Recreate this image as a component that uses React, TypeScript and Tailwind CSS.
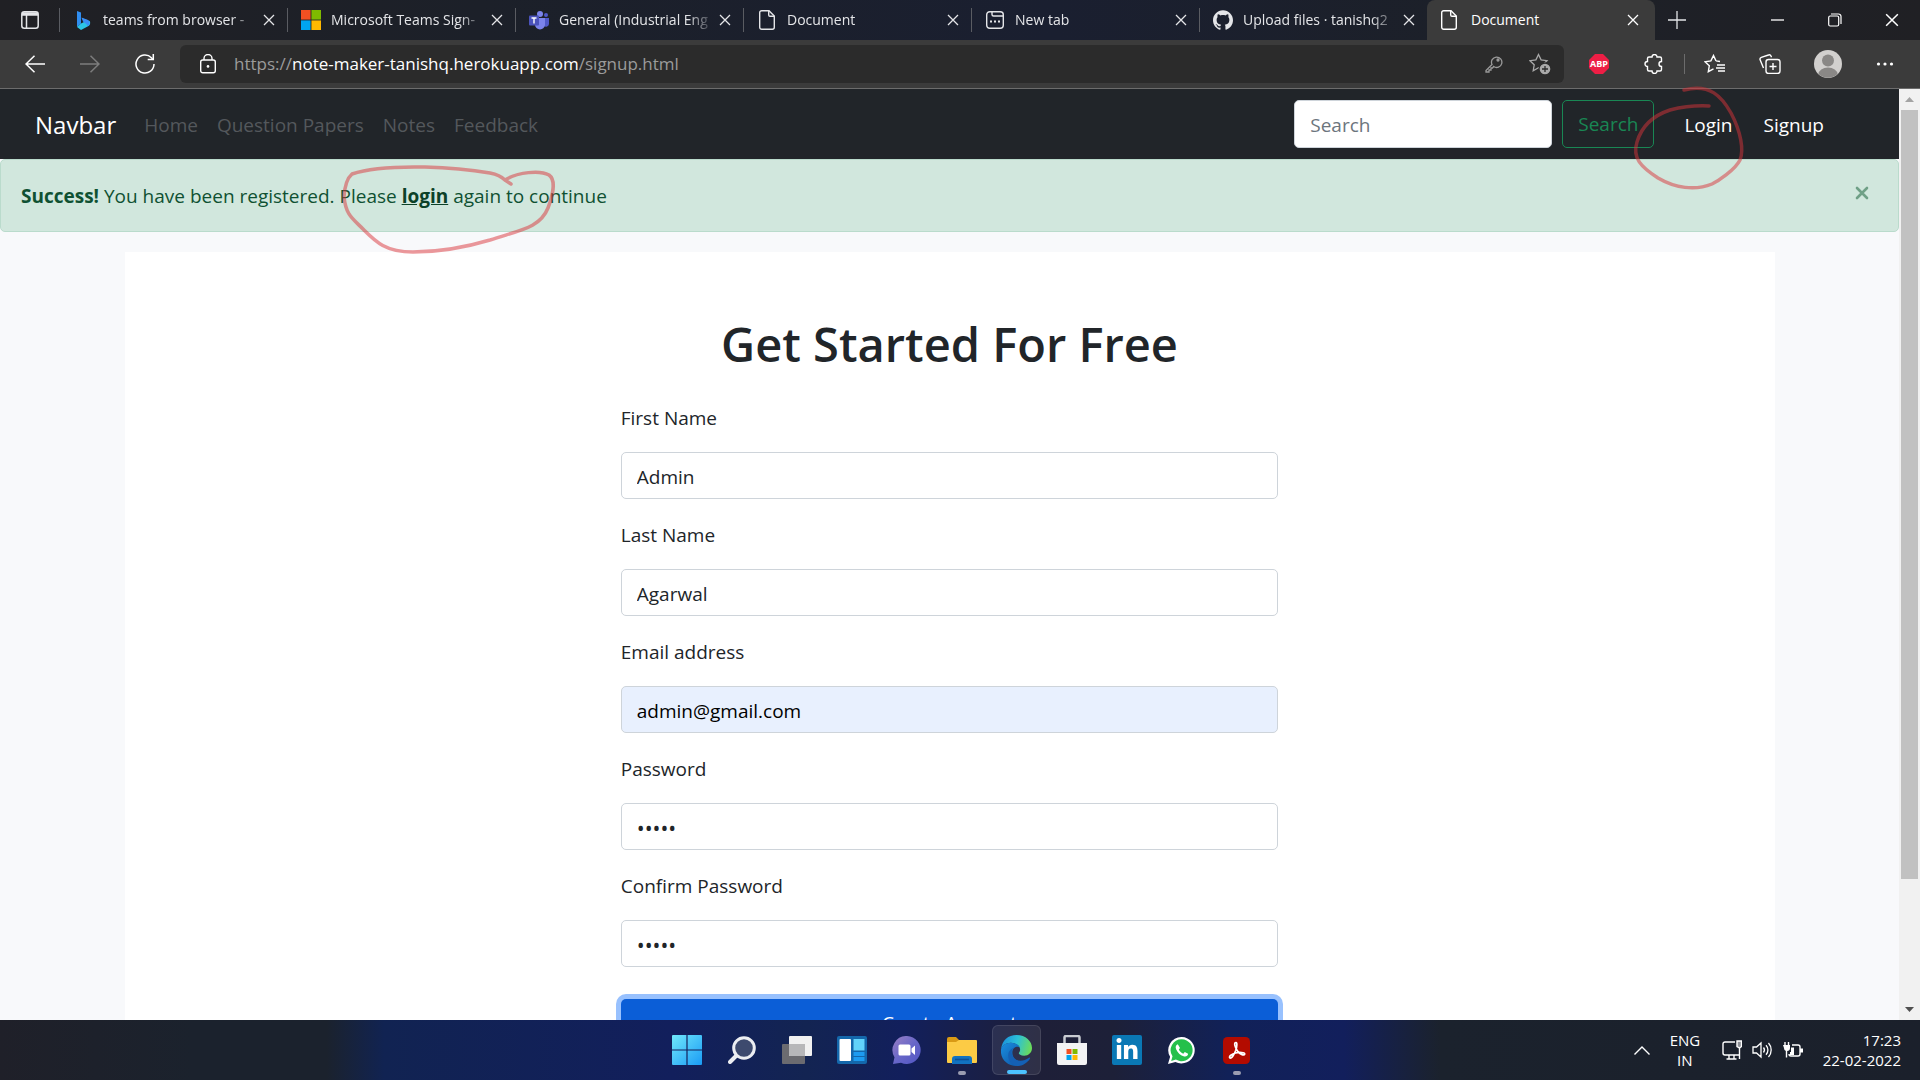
import React, { ReactNode } from 'react';
import { SiGithub } from 'react-icons/si';
import { FaLinkedinIn } from 'react-icons/fa';

const tabFade = 'min-w-0 flex-1 overflow-hidden whitespace-nowrap [mask-image:linear-gradient(to_right,#000_calc(100%-28px),transparent)]';

function Cross({ size = 12 }: { size?: number }) {
  return (
    <svg width={size} height={size} viewBox="0 0 12 12" fill="none" stroke="currentColor" strokeWidth="1.3" aria-hidden="true">
      <path d="M1 1l10 10M11 1L1 11" />
    </svg>
  );
}

function BingIcon() {
  return (
    <svg width="16" height="20" viewBox="0 0 16 20" aria-hidden="true">
      <path d="M2 1l4 1.5v11L2 17z" fill="#2f8df0" />
      <path d="M2 17l4-3.500 3.500-1.800L6.500 8l8 3c1 .7 1 3.500-.5 4.700L6 20 2 17z" fill="#2cc4e6" />
      <path d="M6.500 7.500l6 2.200c3 1.500 2.600 5 .3 6.600-.5-2.400-3.800-3.600-4.800-4.800z" fill="#3a8ef5" />
    </svg>
  );
}

function MicrosoftIcon({ size = 20 }: { size?: number }) {
  return (
    <svg width={size} height={size} viewBox="0 0 20 20" aria-hidden="true">
      <path d="M0 0h9.600v9.600H0z" fill="#f25022" />
      <path d="M10.400 0H20v9.600h-9.600z" fill="#7fba00" />
      <path d="M0 10.400h9.600V20H0z" fill="#00a4ef" />
      <path d="M10.400 10.400H20V20h-9.600z" fill="#ffb900" />
    </svg>
  );
}

function TeamsIcon() {
  return (
    <svg width="20" height="20" viewBox="0 0 20 20" aria-hidden="true">
      <circle cx="17" cy="5" r="2" fill="#5059c9" />
      <path d="M14 8h6v6a3 3 0 0 1-5 2z" fill="#5059c9" />
      <circle cx="11" cy="4" r="3" fill="#7b83eb" />
      <path d="M6 8h10v6.500a5 5 0 0 1-10 0z" fill="#7b83eb" />
      <rect x="0" y="5.500" width="10" height="10" rx="1" fill="#4b53bc" />
      <path d="M2.500 8h5M5 8v5.500" stroke="#fff" strokeWidth="1.400" />
    </svg>
  );
}

function PageIcon() {
  return (
    <svg width="16" height="20" viewBox="0 0 16 20" fill="none" stroke="currentColor" strokeWidth="1.400" aria-hidden="true">
      <path d="M2.700 .7H10l5.300 5.300v11.300a2 2 0 0 1-2 2H2.700a2 2 0 0 1-2-2V2.700a2 2 0 0 1 2-2z" />
      <path d="M9.700 .7V5a1.300 1.300 0 0 0 1.300 1.300h4.300" />
    </svg>
  );
}

function NewTabIcon() {
  return (
    <svg width="18" height="18" viewBox="0 0 18 18" fill="none" stroke="currentColor" strokeWidth="1.400" aria-hidden="true">
      <rect x=".7" y=".7" width="16.600" height="16.600" rx="3" />
      <path d="M6 1v2.500a1.500 1.500 0 0 0 1.500 1.500H17" />
      <path d="M4 10.500h2M8 10.500h2M12 10.500h2" strokeWidth="2" />
    </svg>
  );
}

const tabs: { title: string; icon: ReactNode }[] = [
  { title: 'teams from browser -', icon: <BingIcon /> },
  { title: 'Microsoft Teams Sign-', icon: <MicrosoftIcon /> },
  { title: 'General (Industrial Eng', icon: <TeamsIcon /> },
  { title: 'Document', icon: <PageIcon /> },
  { title: 'New tab', icon: <NewTabIcon /> },
  { title: 'Upload files · tanishq2', icon: <SiGithub size={20} /> },
];

function TabBar() {
  return (
    <div className="flex h-10 bg-[linear-gradient(90deg,#202024,#1c2029_25%,#1a1f30_55%,#1c2029_75%,#202024)] font-['Open_Sans',sans-serif] text-sm text-[#e4e5e8]">
      <div className="flex w-[59px] items-center justify-center">
        <button aria-label="Tab actions">
          <svg width="18" height="18" viewBox="0 0 18 18" fill="none" stroke="currentColor" strokeWidth="1.500" aria-hidden="true">
            <rect x=".8" y=".8" width="16.400" height="16.400" rx="2.500" />
            <path d="M1 3h16" strokeWidth="3.500" />
            <path d="M5.500 4v13" />
          </svg>
        </button>
      </div>
      {tabs.map((tab) => (
        <div key={tab.title} className="flex min-w-0 max-w-[228px] flex-1 items-center">
          <div className="h-6 w-px shrink-0 bg-[#5a5c62]" />
          <div className="flex min-w-0 flex-1 items-center pl-[13px] pr-2">
            <span className="flex w-5 shrink-0 justify-center">{tab.icon}</span>
            <span className={`ml-[10px] ${tabFade}`}>{tab.title}</span>
            <button aria-label={`Close ${tab.title}`} className="p-1"><Cross size={12} /></button>
          </div>
        </div>
      ))}
      <div className="flex min-w-0 max-w-[228px] flex-1 items-center rounded-t-lg bg-[#3b3b3b] pl-3 pr-4 text-white">
        <span className="flex w-5 shrink-0 justify-center"><PageIcon /></span>
        <span className="ml-3 flex-1">Document</span>
        <button aria-label="Close Document"><Cross size={12} /></button>
      </div>
      <button aria-label="New tab" className="flex w-11 items-center justify-center">
        <svg width="18" height="18" viewBox="0 0 18 18" stroke="currentColor" strokeWidth="1.300" aria-hidden="true"><path d="M9 0v18M0 9h18" /></svg>
      </button>
      <div className="ml-auto flex text-white">
        <button aria-label="Minimise" className="flex w-[57px] items-center justify-center">
          <svg width="13" height="12" viewBox="0 0 13 12" stroke="currentColor" strokeWidth="1.300" aria-hidden="true"><path d="M0 6h13" /></svg>
        </button>
        <button aria-label="Restore" className="flex w-[57px] items-center justify-center">
          <svg width="14" height="14" viewBox="0 0 14 14" fill="none" stroke="currentColor" strokeWidth="1.200" aria-hidden="true">
            <rect x=".7" y="3" width="10" height="10" rx="1.500" />
            <path d="M3 1h7.500a2.500 2.500 0 0 1 2.500 2.500v7.500" />
          </svg>
        </button>
        <button aria-label="Close" className="flex w-[57px] items-center justify-center"><Cross size={14} /></button>
      </div>
    </div>
  );
}

const star = 'M9.500 1.500l2.600 5.400 5.900.8-4.300 4.100 1 5.900-5.200-2.900-5.300 2.900 1-5.900L1 7.700l5.900-.8z';

function Toolbar() {
  return (
    <div className="flex h-[49px] items-center border-b border-[#6c6c6c] bg-[#3b3b3b] text-white">
      <div className="flex w-[180px] shrink-0 items-center">
        <button aria-label="Back" className="ml-[25px] w-5">
          <svg width="20" height="18" viewBox="0 0 20 18" fill="none" stroke="currentColor" strokeWidth="1.500" aria-hidden="true"><path d="M20 9H1M9.500 .7L1 9l8.500 8.300" /></svg>
        </button>
        <button aria-label="Forward" className="ml-[35px] w-5 text-[#7d7d7d]">
          <svg width="20" height="18" viewBox="0 0 20 18" fill="none" stroke="currentColor" strokeWidth="1.500" aria-hidden="true"><path d="M0 9h19M10.500 .7L19 9l-8.500 8.300" /></svg>
        </button>
        <button aria-label="Refresh" className="ml-[35px] w-5">
          <svg width="20" height="20" viewBox="0 0 20 20" fill="none" stroke="currentColor" strokeWidth="1.500" aria-hidden="true">
            <path d="M19 10a9 9 0 1 1-2.600-6.300L18 5.500" />
            <path d="M18.300 0v5.600h-5.600" />
          </svg>
        </button>
      </div>
      <div className="flex h-[38px] min-w-0 flex-1 items-center rounded-md bg-[#2b2b2b]">
        <svg className="ml-5 shrink-0" width="16" height="20" viewBox="0 0 16 20" fill="none" stroke="currentColor" strokeWidth="1.400" aria-hidden="true">
          <rect x=".7" y="6" width="14.600" height="12.800" rx="2" />
          <path d="M4 6V4.500a4 4 0 0 1 8 0V6" />
          <circle cx="8" cy="12.400" r="1.300" fill="currentColor" stroke="none" />
        </svg>
        <div className="ml-[18px] flex-1 whitespace-nowrap font-['Open_Sans',sans-serif] text-[17px] text-[#9b9b9b]">
          https://<span className="text-white">note-maker-tanishq.herokuapp.com</span>/signup.html
        </div>
        <button aria-label="Saved passwords" className="text-[#9b9b9b]">
          <svg width="18" height="18" viewBox="0 0 18 18" fill="none" stroke="currentColor" strokeWidth="1.300" aria-hidden="true">
            <path d="M7 9.500L1 15.500V17h3v-2h2v-2h1.500l1.200-1.500A5.200 5.200 0 1 0 7 9.500z" />
            <circle cx="13" cy="5" r="1" fill="currentColor" />
          </svg>
        </button>
        <button aria-label="Add to favourites" className="ml-[26px] mr-[13px] text-[#a9a9a9]">
          <svg width="22" height="22" viewBox="0 0 22 22" fill="none" stroke="currentColor" strokeWidth="1.300" aria-hidden="true">
            <path d={star} />
            <circle cx="16" cy="16" r="6" fill="currentColor" stroke="#2b2b2b" />
            <path d="M16 13v6M13 16h6" stroke="#2b2b2b" />
          </svg>
        </button>
      </div>
      <div className="flex w-[356px] shrink-0 items-center pl-[25px]">
        <button aria-label="Adblock Plus" className="flex size-5 items-center justify-center bg-[#ed1e45] font-['Open_Sans',sans-serif] text-[9px] font-bold text-white [clip-path:polygon(30%_0,70%_0,100%_30%,100%_70%,70%_100%,30%_100%,0_70%,0_30%)]">ABP</button>
        <button aria-label="Extensions" className="ml-[35px]">
          <svg width="20" height="20" viewBox="0 0 20 20" fill="none" stroke="currentColor" strokeWidth="1.400" aria-hidden="true">
            <path d="M5 3h3a2.500 2.500 0 0 1 5 0h3a1.500 1.500 0 0 1 1.500 1.500v3a2.500 2.500 0 0 0 0 5v3A1.500 1.500 0 0 1 16 17h-3a2.500 2.500 0 0 1-5 0H5a1.500 1.500 0 0 1-1.500-1.500v-3a2.500 2.500 0 0 1 0-5v-3A1.500 1.500 0 0 1 5 3z" />
          </svg>
        </button>
        <div className="ml-5 h-5 w-px bg-[#6c6c6c]" />
        <button aria-label="Favourites" className="ml-[19px]">
          <svg width="22" height="20" viewBox="0 0 22 20" fill="none" stroke="currentColor" strokeWidth="1.400" aria-hidden="true">
            <path d="M12 6.900L9.500 1.500 6.900 6.900 1 7.700l4.300 4.100-1 5.900 5.200-2.900M12 6.900l4 .6M13 11h8M12 14h9M14 17h7" />
          </svg>
        </button>
        <button aria-label="Collections" className="ml-[33px]">
          <svg width="22" height="20" viewBox="0 0 22 20" fill="none" stroke="currentColor" strokeWidth="1.400" aria-hidden="true">
            <rect x="7" y="5.500" width="14" height="14" rx="2.500" />
            <path d="M14 9v7M10.500 12.500h7M4.500 14L1.200 6a2 2 0 0 1 1.100-2.600L9.500 1a2 2 0 0 1 2.500 1l.5 1.200" />
          </svg>
        </button>
        <button aria-label="Profile" className="ml-[33px]">
          <svg width="28" height="28" viewBox="0 0 28 28" aria-hidden="true">
            <circle cx="14" cy="14" r="14" fill="#d2d0ce" />
            <circle cx="14" cy="10.500" r="6" fill="#8a8886" />
            <path d="M4.500 24a9.500 6.500 0 0 1 19 0A14 14 0 0 1 4.500 24z" fill="#8a8886" />
          </svg>
        </button>
        <button aria-label="Settings and more" className="ml-[34px]">
          <svg width="18" height="4" viewBox="0 0 18 4" fill="currentColor" aria-hidden="true"><circle cx="2.500" cy="2" r="1.600" /><circle cx="9" cy="2" r="1.600" /><circle cx="15.500" cy="2" r="1.600" /></svg>
        </button>
      </div>
    </div>
  );
}

function Navbar() {
  return (
    <nav className="flex h-[70px] items-center bg-[#212529] pl-[35px] pr-[75px] text-[19px]">
      <a href="#" className="mr-7 pt-0.5 text-2xl text-white">Navbar</a>
      <div className="flex gap-[19px] pt-0.5 text-[#54585c]">
        <a href="#">Home</a>
        <a href="#">Question Papers</a>
        <a href="#">Notes</a>
        <a href="#">Feedback</a>
      </div>
      <form className="ml-auto flex gap-[10px]">
        <input type="search" aria-label="Search" placeholder="Search" className="h-12 w-[258px] rounded-[5px] border border-[#ced4da] bg-white px-[15px] pt-0.5 placeholder:text-[#6c757d]" />
        <button type="button" className="h-12 rounded-[5px] border border-[#198754] px-[15px] text-[#198754]">Search</button>
      </form>
      <a href="#" className="ml-[30px] pt-0.5 text-white">Login</a>
      <a href="#" className="ml-[31px] pt-0.5 text-white">Signup</a>
    </nav>
  );
}

function Alert() {
  return (
    <div role="alert" className="flex h-[73px] items-center justify-between rounded-[5px] border border-[#badbcc] bg-[#d1e7dd] pl-5 pr-[29px] text-[19px] text-[#0f5132]">
      <p className="pt-0.5">
        <strong className="font-bold">Success!</strong> You have been registered. Please{' '}
        <a href="#" className="font-bold text-[#0c4128] underline">login</a> again to continue
      </p>
      <button aria-label="Close" className="mb-1.5 text-[#6fa086]">
        <svg width="14" height="14" viewBox="0 0 14 14" stroke="currentColor" strokeWidth="2.600" strokeLinecap="round" aria-hidden="true"><path d="M2 2l10 10M12 2L2 12" /></svg>
      </button>
    </div>
  );
}

const fields = [
  { id: 'first', label: 'First Name', type: 'text', value: 'Admin', tone: 'bg-white text-[19px]' },
  { id: 'last', label: 'Last Name', type: 'text', value: 'Agarwal', tone: 'bg-white text-[19px]' },
  { id: 'email', label: 'Email address', type: 'email', value: 'admin@gmail.com', tone: 'bg-[#e8f0fe] text-[19px] text-black' },
  { id: 'password', label: 'Password', type: 'password', value: 'admin', tone: 'bg-white text-[21px]' },
  { id: 'confirm', label: 'Confirm Password', type: 'password', value: 'admin', tone: 'bg-white text-[21px]' },
];

function SignupForm() {
  return (
    <div className="mx-auto mt-5 w-full max-w-[1650px] bg-white pb-20 pt-[62px] text-[#212529]">
      <h1 className="text-center text-[47px] font-semibold leading-[60px]">Get Started For Free</h1>
      <form className="mx-auto mt-[29px] w-5/12 px-[15px]">
        {fields.map((f) => (
          <div key={f.id} className="mb-[21px]">
            <label htmlFor={f.id} className="mb-[19px] block text-[19px] leading-[30px]">{f.label}</label>
            <input id={f.id} type={f.type} defaultValue={f.value} className={`block h-[47px] w-full rounded-[5px] border border-[#ced4da] px-[15px] pt-0.5 ${f.tone}`} />
          </div>
        ))}
        <button type="button" className="mt-[11px] h-12 w-full rounded-[5px] bg-[#0b5ed7] text-[19px] text-white ring-[5px] ring-[#98c1fe]">Create Account</button>
      </form>
    </div>
  );
}

function Scrollbar() {
  return (
    <div className="flex w-[21px] shrink-0 flex-col items-center bg-[#f1f1f1]">
      <svg className="my-2 shrink-0" width="9" height="5" viewBox="0 0 9 5" aria-hidden="true"><path d="M0 5l4.500-5L9 5z" fill="#a3a3a3" /></svg>
      <div className="flex w-[17px] flex-1 flex-col"><div className="h-[86.5%] bg-[#c1c1c1]" /></div>
      <svg className="my-2 shrink-0" width="9" height="5" viewBox="0 0 9 5" aria-hidden="true"><path d="M0 0h9L4.500 5z" fill="#505050" /></svg>
    </div>
  );
}

function InkMarks() {
  return (
    <svg className="pointer-events-none absolute left-0 top-0" width="1920" height="280" viewBox="0 0 1920 280" fill="none" stroke="#d9333a" strokeOpacity=".5" strokeWidth="3.500" strokeLinecap="round" strokeLinejoin="round" aria-hidden="true">
      <path d="M511 184L505 180Q500 175 490 173Q460 168 425 167Q375 166 352 174Q345 180 344 197C346 215 352 218 363 229C375 241 385 252 413 252C440 252 470 246 490 240C520 230 540 228 548 208C553 195 556 180 549 175C540 170 518 172 505 180" />
      <path d="M1684 90C1710 83 1722 97 1731 113C1741 132 1744 150 1740 160C1735 170 1718 181 1712 184C1695 191 1675 188 1658 178C1641 167 1632 158 1637 142C1642 125 1655 115 1670 110Q1690 105 1709 106" />
    </svg>
  );
}

const taskIcons: { name: string; state?: 'active' | 'open'; icon: ReactNode }[] = [
  {
    name: 'Start',
    icon: (
      <svg width="30" height="30" viewBox="0 0 30 30">
        <defs><linearGradient id="win" x1="0" y1="0" x2="1" y2="1"><stop offset="0" stopColor="#70e8fb" /><stop offset="1" stopColor="#1a9bf5" /></linearGradient></defs>
        <path d="M1 0h13.400v14.400H0V1a1 1 0 0 1 1-1zM15.600 0H29a1 1 0 0 1 1 1v13.400H15.600zM0 15.600h14.400V30H1a1 1 0 0 1-1-1zM15.600 15.600H30V29a1 1 0 0 1-1 1H15.600z" fill="url(#win)" />
      </svg>
    ),
  },
  {
    name: 'Search',
    icon: (
      <svg width="28" height="28" viewBox="0 0 28 28" fill="none" stroke="#eceef2" strokeLinecap="round">
        <path d="M9 19l-7 7" strokeWidth="4" />
        <circle cx="16" cy="12" r="10.300" fill="#3d4a6e" strokeWidth="3" />
      </svg>
    ),
  },
  {
    name: 'Task View',
    icon: (
      <svg width="30" height="28" viewBox="0 0 30 28">
        <rect y="8" width="23" height="20" rx="1" fill="#6b6b70" />
        <rect x="7" width="23" height="20" rx="1" fill="#f1f1f1" />
        <path d="M7 8h16v12H8a1 1 0 0 1-1-1z" fill="#b7b7b9" />
      </svg>
    ),
  },
  {
    name: 'Widgets',
    icon: (
      <svg width="30" height="28" viewBox="0 0 30 28">
        <rect width="30" height="28" rx="2" fill="#1467ab" />
        <rect x="2.500" y="3" width="11.500" height="22" rx="1" fill="#fff" />
        <path d="M16.500 3H27.500v11.500h-11z" fill="#62d3fa" />
        <path d="M16.500 16h11v4h-11zM16.500 21h11v4h-11z" fill="#1d9bf0" />
      </svg>
    ),
  },
  {
    name: 'Chat',
    icon: (
      <svg width="29" height="28" viewBox="0 0 29 28">
        <defs><linearGradient id="chat" x1="0" y1="0" x2="1" y2="1"><stop offset="0" stopColor="#9a7fc4" /><stop offset=".5" stopColor="#6867c8" /><stop offset="1" stopColor="#5055c4" /></linearGradient></defs>
        <path d="M15 0a14 14 0 1 1-6 26.800L1 28l1.500-6.800A14 14 0 0 1 15 0z" fill="url(#chat)" />
        <rect x="6.500" y="8.500" width="12" height="11" rx="1.500" fill="#fff" />
        <path d="M19.500 12.500l3.500-3v9.500l-3.500-3z" fill="#fff" />
      </svg>
    ),
  },
  {
    name: 'File Explorer',
    state: 'open',
    icon: (
      <svg width="30" height="27" viewBox="0 0 30 27">
        <path d="M0 2a2 2 0 0 1 2-2h7l4 4v4H0z" fill="#d99a15" />
        <path d="M0 5h9l3-2h17a1 1 0 0 1 1 1v21a1 1 0 0 1-1 1H1a1 1 0 0 1-1-1z" fill="#fccb45" />
        <path d="M5 27v-5a3 3 0 0 1 3-3h14a3 3 0 0 1 3 3v5z" fill="#1272c0" />
        <path d="M8 22.500h14" stroke="#0d4f96" strokeWidth="1.600" />
      </svg>
    ),
  },
  {
    name: 'Microsoft Edge',
    state: 'active',
    icon: (
      <svg width="31" height="31" viewBox="0 0 30 30">
        <defs>
          <linearGradient id="edgeTop" x1="0" y1=".3" x2="1" y2=".5"><stop offset="0" stopColor="#1a8fdc" /><stop offset=".5" stopColor="#2cc0d8" /><stop offset="1" stopColor="#6bdc5a" /></linearGradient>
          <linearGradient id="edgeLow" x1="0" y1="0" x2="1" y2="1"><stop offset="0" stopColor="#1a8fe0" /><stop offset="1" stopColor="#0d4fa0" /></linearGradient>
        </defs>
        <path d="M0 14C1 5 7 0 15 0c9 0 15 6 15 12.500 0 4.500-3.500 7.500-7.500 7.500-3.500 0-5.300-1.200-5.300-2.300 0-.9 1.300-1.400 1.300-3.700C18.500 10 14 7.500 9.500 7.500 4.500 7.500 1 10.500 0 14z" fill="url(#edgeTop)" />
        <path d="M0 14c1-3.800 4.500-6.500 9.500-6.500 4 0 7.500 1.800 8.600 4.500-1.600-1.500-7.100-1-7.100 5 0 7 6.500 10 11.500 8.800C20.500 28.500 18 30 15 30 6 30-1 23 0 14z" fill="url(#edgeLow)" />
        <path d="M13 12.200c-3 2-3.500 6-1 9.300 3.500 4.500 10 4.300 15 .5.800-.5 1.500.2 1 1C25 27.500 20.500 30 16.500 30 10 29.500 6.500 24.500 7 19c.3-3.500 3-6 6-6.800z" fill="#1460b4" />
      </svg>
    ),
  },
  {
    name: 'Microsoft Store',
    icon: (
      <svg width="30" height="30" viewBox="0 0 30 30">
        <path d="M7.500 9V2.500a1.500 1.500 0 0 1 1.500-1.500h12a1.500 1.500 0 0 1 1.500 1.500V9" fill="none" stroke="#c9ccd2" strokeWidth="2.500" />
        <path d="M0 8h30v20a2 2 0 0 1-2 2H2a2 2 0 0 1-2-2z" fill="#f3f3f4" />
        <path d="M9.500 14h5v5h-5z" fill="#f25022" /><path d="M15.500 14h5v5h-5z" fill="#7fba00" />
        <path d="M9.500 20h5v5h-5z" fill="#00a4ef" /><path d="M15.500 20h5v5h-5z" fill="#ffb900" />
      </svg>
    ),
  },
  {
    name: 'LinkedIn',
    icon: <span className="flex size-[30px] items-center justify-center rounded-xs bg-[#0a78b5] text-white"><FaLinkedinIn size={24} /></span>,
  },
  {
    name: 'WhatsApp',
    icon: (
      <svg width="27" height="27" viewBox="0 0 27 27">
        <path d="M13.700 0a13.200 13.200 0 1 1-6.300 24.900L0 27l2.100-7.200A13.200 13.200 0 0 1 13.700 0z" fill="#fff" />
        <path d="M13.700 2.200a11 11 0 1 1-5.800 20.400L3.200 24l1.300-4.700A11 11 0 0 1 13.700 2.200z" fill="#25c04b" />
        <path d="M9.800 7.300c-2 .7-2.600 2.700-1.700 5 1.600 3.700 4.400 6.300 8.200 7.200 2 .4 3.600-.8 3.800-2.700l-3.300-1.700-1.500 1.600c-2-.8-3.500-2.200-4.500-4.200l1.200-1.500z" fill="#fff" />
      </svg>
    ),
  },
  {
    name: 'Adobe Acrobat',
    state: 'open',
    icon: (
      <svg width="27" height="27" viewBox="0 0 27 27">
        <rect width="27" height="27" rx="4.500" fill="#b30b00" />
        <path d="M13 5.500c-2.500 0-1 5 1.500 8.500 2 3 6.500 5 7.200 3.200.7-2-6-2.200-9.200-1.200-3.500 1-7 3.500-5.700 4.800 1.700 1.500 4.700-4 6-7.500 1.200-3.500 1.500-7.800.2-7.800z" fill="none" stroke="#fff" strokeWidth="1.700" />
      </svg>
    ),
  },
];

function Taskbar() {
  return (
    <footer className="grid h-[60px] shrink-0 grid-cols-[1fr_auto_1fr] bg-[linear-gradient(90deg,#1f2029,#1b222d_10%,#1b222d_17%,#112352_20%,#121f5c_35%,#132452_42%,#121f5c_47%,#1e1f38_54%,#1d2038_58%,#112158_64%,#121f5c_70%,#1b222d_75%,#1b202b)] font-['Open_Sans',sans-serif] text-white">
      <div />
      <div className="flex items-center pl-[3px]">
        {taskIcons.map((t) => (
          <button
            key={t.name}
            aria-label={t.name}
            className={`relative mx-[3px] flex h-[50px] w-[49px] items-center justify-center rounded-md ${t.state === 'active' ? 'border border-white/10 bg-white/8' : ''}`}
          >
            {t.icon}
            {t.state === 'active' && <span className="absolute bottom-0 h-1 w-5 rounded-full bg-[#4cc2ff]" />}
            {t.state === 'open' && <span className="absolute bottom-0 h-1 w-2 rounded-full bg-[#9a9cb0]" />}
          </button>
        ))}
      </div>
      <div className="flex items-center justify-end pr-[19px] text-[15px] leading-5">
        <button aria-label="Show hidden icons">
          <svg width="16" height="9" viewBox="0 0 16 9" fill="none" stroke="currentColor" strokeWidth="1.400" aria-hidden="true"><path d="M.5 8.500L8 1l7.500 7.500" /></svg>
        </button>
        <button className="ml-5 w-[30px] text-center">ENG<br />IN</button>
        <button aria-label="Network, volume and battery" className="ml-[22px] flex items-center gap-[10px]">
          <svg width="20" height="20" viewBox="0 0 20 20" fill="none" stroke="currentColor" strokeWidth="1.400">
            <path d="M13 2H3a2 2 0 0 0-2 2v9a2 2 0 0 0 2 2h14M7 15v4M12 15v4M4.500 19h10M17.500 8v11" />
            <path d="M15 1h4.500v5.500L17.500 8 15 6.500z" fill="currentColor" fillOpacity=".5" />
          </svg>
          <svg width="21" height="18" viewBox="0 0 21 18" fill="none" stroke="currentColor" strokeWidth="1.300">
            <path d="M1 6h3.500L9 2v14l-4.500-4H1zM11.500 6.500a4 4 0 0 1 0 5M14 4.200a7 7 0 0 1 0 9.600M16.500 2a10.500 10.500 0 0 1 0 14" />
          </svg>
          <svg width="20" height="16" viewBox="0 0 20 16" fill="none" stroke="currentColor" strokeWidth="1.400">
            <path d="M9 3h6a2 2 0 0 1 2 2v7a2 2 0 0 1-2 2H8a2 2 0 0 1-2-2" />
            <path d="M9.500 5.500v6H7" strokeWidth="3" />
            <path d="M18.500 6.500v4" strokeWidth="3" />
            <path d="M0 3h7v3a3 3 0 0 1-6 0z" fill="currentColor" stroke="none" /><path d="M2 0v3M5.500 0v3M3.500 8v7.500" />
          </svg>
        </button>
        <button className="ml-5 whitespace-nowrap text-right">17:23<br />22-02-2022</button>
      </div>
    </footer>
  );
}

export default function App() {
  return (
    <div className="relative flex h-screen flex-col overflow-hidden bg-[#f8f9fb]">
      <TabBar />
      <Toolbar />
      <div className="flex min-h-0 flex-1">
        <main className="min-w-0 flex-1 overflow-hidden font-['Open_Sans',sans-serif]">
          <Navbar />
          <Alert />
          <SignupForm />
        </main>
        <Scrollbar />
      </div>
      <Taskbar />
      <InkMarks />
    </div>
  );
}
